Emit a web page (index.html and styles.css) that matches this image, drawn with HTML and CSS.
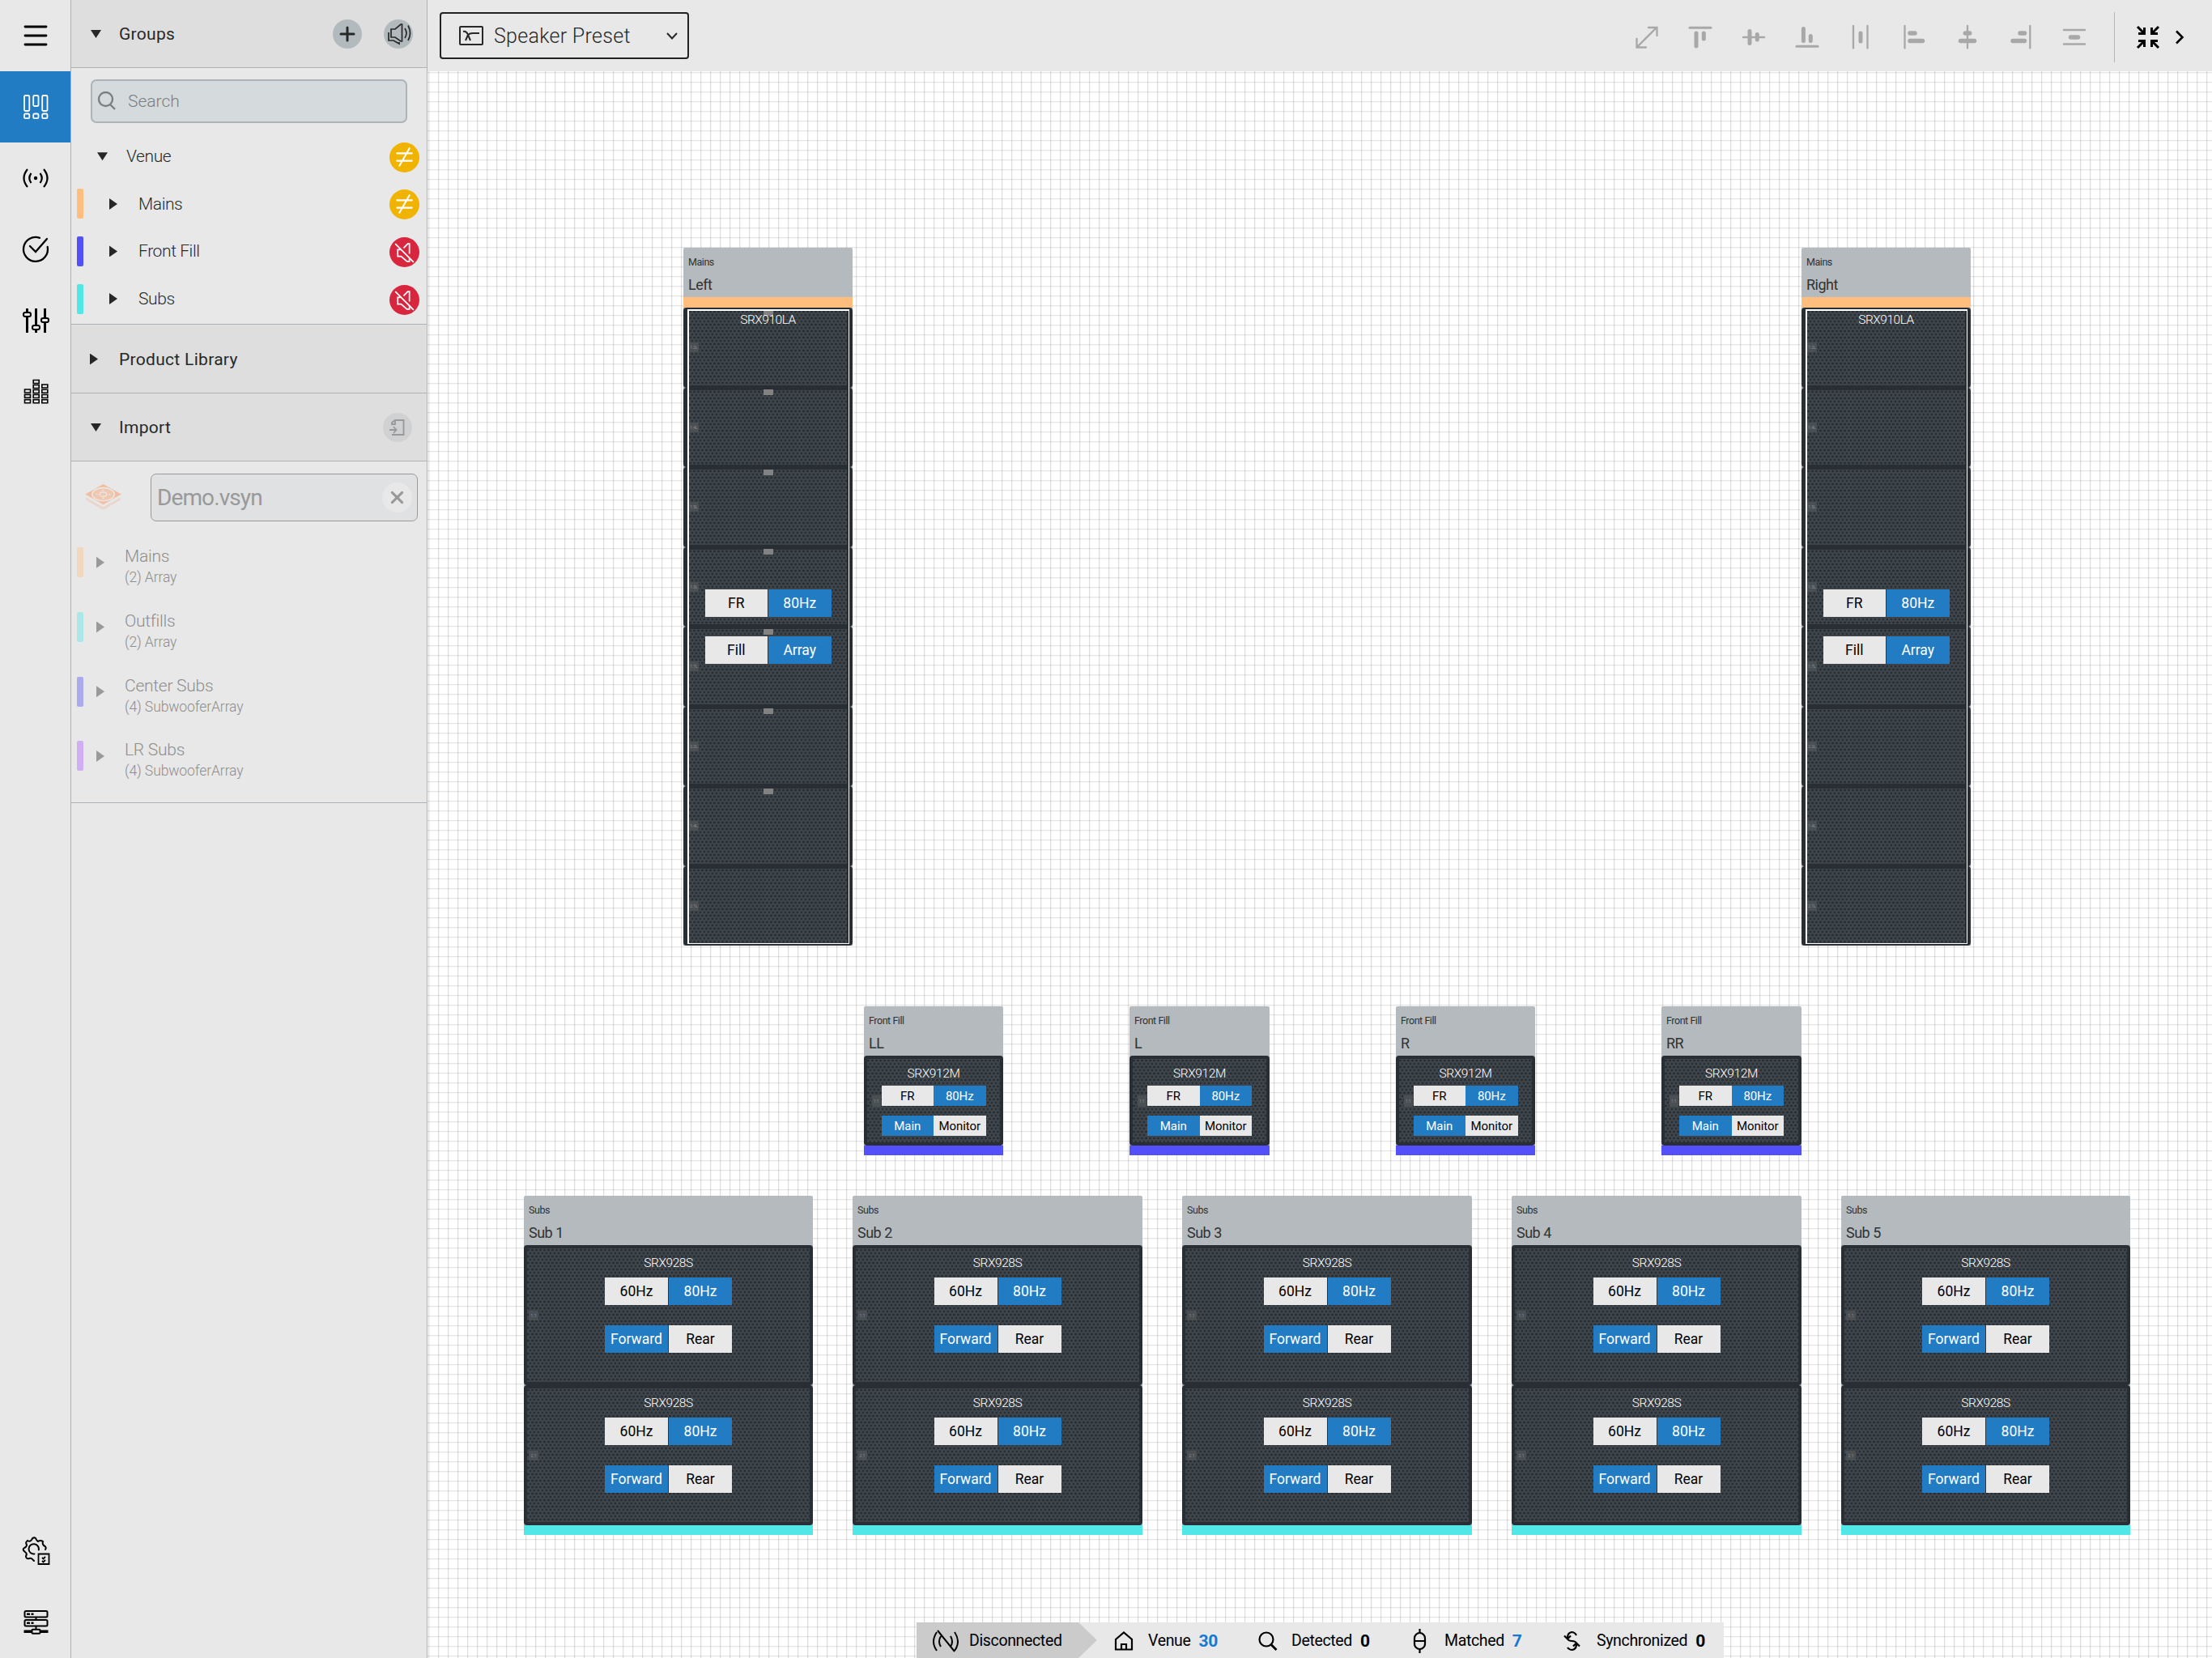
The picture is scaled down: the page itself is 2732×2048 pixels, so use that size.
FILE: index.html
```html
<!DOCTYPE html>
<html lang="en">
<head>
<meta charset="utf-8">
<title>Venue</title>
<link rel="stylesheet" href="styles.css">
</head>
<body>
<svg class="defs" width="0" height="0">
  <symbol id="not-equal" viewBox="-18 -18 36 36"><path d="M-9-5H9M-9 4H9M6-11L-6 10" fill="none" stroke="#fff" stroke-width="2" stroke-linecap="round"/></symbol>
  <symbol id="muted" viewBox="-18 -18 36 36"><path d="M-5-3H-8V5H-4L3 11H6V6M6 2V-10H4L-1-5M-11-10L11 12" fill="none" stroke="#fff" stroke-width="1.7"/></symbol>
</svg>
<div class="app">
  <nav class="rail">
    <a class="rail-item"><svg viewBox="-18 -18 36 36"><path d="M-13-11H13M-13 0H13M-13 11H13" stroke-width="2.8" stroke-linecap="round"/></svg></a>
    <a class="rail-item active"><svg viewBox="-18 -18 36 36"><g stroke-width="1.8"><rect x="-14" y="-14" width="6.3" height="19" rx="1.5"/><rect x="-2.8" y="-14" width="6.3" height="13" rx="1.5"/><rect x="8.2" y="-14" width="6.3" height="19" rx="1.5"/><rect x="-14" y="8.5" width="6.3" height="5.7" rx="1.5"/><rect x="-2.8" y="8.5" width="6.3" height="5.7" rx="1.5"/><rect x="8.2" y="8.5" width="6.3" height="5.7" rx="1.5"/></g></svg></a>
    <a class="rail-item"><svg viewBox="-18 -18 36 36"><circle r="2.2" fill="#000" stroke="none"/><path d="M-10-11Q-19 0-10 11M10-11Q19 0 10 11M-5.5-6Q-10 0-5.5 6M5.5-6Q10 0 5.5 6" stroke-width="2.2"/></svg></a>
    <a class="rail-item"><svg viewBox="-18 -18 36 36"><path d="M5-14.2A15 15 0 1 0 14.7-3M-7-4L0 3L14-13" stroke-width="2.3" stroke-linecap="round"/></svg></a>
    <a class="rail-item"><svg viewBox="-18 -18 36 36"><path d="M-10.500-15V-10M-10.500-5V15M.5-15V6M.5 11V15M11.500-15V-3M11.500 2V15" stroke-width="3"/><g stroke-width="2"><rect x="-15" y="-10" width="9" height="5" rx="2.200"/><rect x="-4" y="6" width="9" height="5" rx="2.200"/><rect x="7" y="-3" width="9" height="5" rx="2.200"/></g></svg></a>
    <a class="rail-item"><svg viewBox="-18 -18 36 36"><g stroke-width="1.6"><path d="M-13.500-3h7v4h-7zM-13.500 3.400h7v4h-7zM-13.500 9.700h7v4h-7zM-2.800-14.500h7v4h-7zM-2.800-8.500h7v4h-7zM-2.800-2.500h7v4h-7zM-2.800 3.500h7v4h-7zM-2.800 9.700h7v4h-7zM7.800-9h7v4h-7zM7.800-2.800h7v4h-7zM7.800 3.500h7v4h-7zM7.800 9.700h7v4h-7z"/></g></svg></a>
    <a class="rail-item rail-bottom"><svg viewBox="-18 -18 36 36"><path d="M12-2Q14-5 10-7Q8-9 9-12Q6-14 3-12Q1-13 0-16Q-3-18-5-14Q-7-11-10-13Q-13-11-11-8Q-11-5-14-4Q-17-2-13 1Q-10 3-12 6Q-12 10-8 9Q-5 8-3 11L-2 12M-1.500 3.500A6.200 6.200 0 1 1 3.800-1.500" stroke-width="2" stroke-linecap="round"/><path d="M3.500 3.500h13v12.500h-13zM8 8l1.500 1.500L12 7M8 12l1.500 1.500L12 11" stroke-width="1.800"/></svg></a>
    <a class="rail-item"><svg viewBox="-18 -18 36 36"><g stroke-width="2"><rect x="-13.500" y="-14" width="28" height="7.500" rx="1.500"/><rect x="-13.500" y="-3" width="28" height="7.500" rx="1.500"/><path d="M.5-6.500V-3M.5 4.500V9"/><rect x="-4.500" y="8.800" width="10" height="5" rx="1"/></g><path d="M-14.500 11.300H-5M6 11.300H15.500" stroke-width="3.500"/><path d="M-11-10.200h4M-5.500-10.200h3M-11 .8h4M-5.500.8h3" stroke-width="2.600"/></svg></a>
  </nav>

  <aside class="panel">
    <section class="section-head">
      <i class="tri down"></i><h2>Groups</h2>
      <button class="round"><svg viewBox="-18 -18 36 36"><path d="M-8 0H8M0-8V8" stroke-width="3" stroke-linecap="round"/></svg></button>
      <button class="round speaker"><svg viewBox="-18 -18 36 36"><path d="M-9-6H-4L3-12H4.500V9H3L-4 4H-9ZM-12-2V8H-6L1 12V10M8-7Q12-1 8 5M12-10.500Q17-1 12 8" stroke-width="1.700"/></svg></button>
    </section>
    <div class="search"><svg viewBox="0 0 24 24"><circle cx="10.500" cy="9.500" r="8.500"/><path d="M16.500 16.500L22 22"/></svg><span>Search</span></div>
    <ul class="groups">
      <li class="root"><i class="tri down"></i><span>Venue</span><svg class="status warn"><use href="#not-equal"/></svg></li>
      <li class="child orange"><b></b><i class="tri"></i><span>Mains</span><svg class="status warn"><use href="#not-equal"/></svg></li>
      <li class="child violet"><b></b><i class="tri"></i><span>Front Fill</span><svg class="status mute"><use href="#muted"/></svg></li>
      <li class="child cyan"><b></b><i class="tri"></i><span>Subs</span><svg class="status mute"><use href="#muted"/></svg></li>
    </ul>
    <section class="section-head library"><i class="tri"></i><h2>Product Library</h2></section>
    <section class="section-head"><i class="tri down"></i><h2>Import</h2>
      <button class="round faded"><svg viewBox="-18 -18 36 36"><path d="M-7-3V-6L-3-9H7.500V9H-7M-7-4H-3V-9M-10 3H-2M-5-1L-1.500 3L-5 7" stroke-width="1.800"/></svg></button>
    </section>
    <div class="import">
      <div class="file">
        <svg class="file-icon" viewBox="0 0 46 34"><path d="M1 17L23 29L45 17V20L23 33L1 20Z" fill="#ebd6cc"/><path d="M0 13L23 0L46 13L23 26Z" fill="#f2bea3"/><ellipse cx="23" cy="13" rx="14" ry="8.300" fill="none" stroke="#e8e8e8" stroke-width="1.800"/><ellipse cx="23" cy="13" rx="12" ry="7" fill="#efc8b2"/><ellipse cx="23" cy="13" rx="4.500" ry="2.800" fill="none" stroke="#e8e8e8" stroke-width="1.300"/><path d="M22 8h2M22 18h2M14 13h2M30 13h2M4 10L14 4M32 22L42 16" stroke="#e8e8e8" stroke-width="1.500"/></svg>
        <div class="file-name"><span>Demo.vsyn</span><button class="clear"><svg viewBox="-18 -18 36 36"><path d="M-6-6L6 6M6-6L-6 6" stroke-width="3" stroke-linecap="round"/></svg></button></div>
      </div>
      <ul class="imports">
        <li class="p-orange"><b></b><i class="tri"></i><div><span>Mains</span><small>(2) Array</small></div></li>
        <li class="p-cyan"><b></b><i class="tri"></i><div><span>Outfills</span><small>(2) Array</small></div></li>
        <li class="p-blue"><b></b><i class="tri"></i><div><span>Center Subs</span><small>(4) SubwooferArray</small></div></li>
        <li class="p-purple"><b></b><i class="tri"></i><div><span>LR Subs</span><small>(4) SubwooferArray</small></div></li>
      </ul>
    </div>
  </aside>

  <main class="main">
    <header class="topbar">
      <button class="preset">
        <svg class="preset-icon" viewBox="0 0 30 24"><rect x="1" y="1" width="28" height="22" rx="1"/><path d="M5 7Q9 6 11 11L14 18M8 18L11 11Q13 9 17 9H25"/></svg>
        <span>Speaker Preset</span>
        <svg class="caret" viewBox="0 0 14 9"><path d="M1 1L7 7.500L13 1"/></svg>
      </button>
      <div class="tools">
        <svg viewBox="-16 -16 32 32"><path d="M-12 12L12-12M2-12H12.500V-2M-12.500 2V12.500H-1" stroke-width="2.300"/></svg>
        <svg viewBox="-16 -16 32 32"><path d="M-13-11.700H13" stroke-width="3"/><path d="M-5-5V11M4.300-5V2" stroke-width="5"/></svg>
        <svg viewBox="-16 -16 32 32"><path d="M-13 0H13" stroke-width="2.500"/><path d="M-5-7.500V7.500M4.300-3.500V3" stroke-width="5"/></svg>
        <svg viewBox="-16 -16 32 32"><path d="M-13 11.200H13" stroke-width="3"/><path d="M-4.600-10.500V4.500M4.300-1.500V4.500" stroke-width="5"/></svg>
        <svg viewBox="-16 -16 32 32"><path d="M-9-14V13.500M8.500-14V13.500" stroke-width="2.300"/><path d="M0-5V5" stroke-width="5"/></svg>
        <svg viewBox="-16 -16 32 32"><path d="M-11.500-14V13.500" stroke-width="2.300"/><path d="M-5-5H1M-5 4.500H10.500" stroke-width="5.500"/></svg>
        <svg viewBox="-16 -16 32 32"><path d="M0-14V13.500" stroke-width="2.300"/><path d="M-2.700-5H2.700M-8.500 4.500H8.500" stroke-width="5.500"/></svg>
        <svg viewBox="-16 -16 32 32"><path d="M11.300-14V13.500" stroke-width="2.300"/><path d="M-1 -5H4.500M-10 4.500H4.500" stroke-width="5.500"/></svg>
        <svg viewBox="-16 -16 32 32"><path d="M-13-9H13M-13 8.500H13" stroke-width="2.500"/><path d="M-4.500 0H4.500" stroke-width="5.500"/></svg>
      </div>
      <i class="divider"></i>
      <svg class="collapse" viewBox="-16 -16 32 32"><path d="M-13-13L-5-5M-4.500-12V-4.500H-12M13-13L5-5M4.500-12V-4.500H12M-13 13L-5 5M-4.500 12V4.500H-12M13 13L5 5M4.500 12V4.500H12" stroke-width="3"/></svg>
      <svg class="next" viewBox="-10 -16 20 32"><path d="M-4-7.500L3.500 0L-4 7.500" stroke-width="2.500"/></svg>
    </header>

    <div class="canvas">
      <article class="node array n-left">
        <header><small>Mains</small><span>Left</span></header><i class="stripe"></i>
        <div class="body slots">
          <div class="cab"><em>1.2L</em></div><div class="cab"><em>1.4L</em></div><div class="cab"><em>1.5L</em></div><div class="cab"><em>1.3L</em></div>
          <div class="cab"><em>1.7L</em></div><div class="cab"><em>2.2L</em></div><div class="cab"><em>1.4L</em></div><div class="cab"><em>2.1L</em></div>
          <div class="frame"><p>SRX910LA</p><div class="toggle"><span>FR</span><span class="on">80Hz</span></div><div class="toggle"><span>Fill</span><span class="on">Array</span></div></div>
        </div>
      </article>
      <article class="node array n-right">
        <header><small>Mains</small><span>Right</span></header><i class="stripe"></i>
        <div class="body">
          <div class="cab"><em>1.2L</em></div><div class="cab"><em>1.4L</em></div><div class="cab"><em>1.5L</em></div><div class="cab"><em>1.3L</em></div>
          <div class="cab"><em>1.7L</em></div><div class="cab"><em>2.2L</em></div><div class="cab"><em>1.4L</em></div><div class="cab"><em>2.1L</em></div>
          <div class="frame"><p>SRX910LA</p><div class="toggle"><span>FR</span><span class="on">80Hz</span></div><div class="toggle"><span>Fill</span><span class="on">Array</span></div></div>
        </div>
      </article>

      <article class="node fill f1"><header><small>Front Fill</small><span>LL</span></header><div class="body"><div class="cab"><em>1:1</em><p>SRX912M</p><div class="toggle"><span>FR</span><span class="on">80Hz</span></div><div class="toggle"><span class="on">Main</span><span>Monitor</span></div></div></div><i class="stripe"></i></article>
      <article class="node fill f2"><header><small>Front Fill</small><span>L</span></header><div class="body"><div class="cab"><em>1:1</em><p>SRX912M</p><div class="toggle"><span>FR</span><span class="on">80Hz</span></div><div class="toggle"><span class="on">Main</span><span>Monitor</span></div></div></div><i class="stripe"></i></article>
      <article class="node fill f3"><header><small>Front Fill</small><span>R</span></header><div class="body"><div class="cab"><em>1:1</em><p>SRX912M</p><div class="toggle"><span>FR</span><span class="on">80Hz</span></div><div class="toggle"><span class="on">Main</span><span>Monitor</span></div></div></div><i class="stripe"></i></article>
      <article class="node fill f4"><header><small>Front Fill</small><span>RR</span></header><div class="body"><div class="cab"><em>1:1</em><p>SRX912M</p><div class="toggle"><span>FR</span><span class="on">80Hz</span></div><div class="toggle"><span class="on">Main</span><span>Monitor</span></div></div></div><i class="stripe"></i></article>

      <article class="node sub s1"><header><small>Subs</small><span>Sub 1</span></header><div class="body">
        <div class="cab"><em>1.1</em><p>SRX928S</p><div class="toggle"><span>60Hz</span><span class="on">80Hz</span></div><div class="toggle"><span class="on">Forward</span><span>Rear</span></div></div>
        <div class="cab"><em>2.1</em><p>SRX928S</p><div class="toggle"><span>60Hz</span><span class="on">80Hz</span></div><div class="toggle"><span class="on">Forward</span><span>Rear</span></div></div>
      </div><i class="stripe"></i></article>
      <article class="node sub s2"><header><small>Subs</small><span>Sub 2</span></header><div class="body">
        <div class="cab"><em>1.1</em><p>SRX928S</p><div class="toggle"><span>60Hz</span><span class="on">80Hz</span></div><div class="toggle"><span class="on">Forward</span><span>Rear</span></div></div>
        <div class="cab"><em>2.1</em><p>SRX928S</p><div class="toggle"><span>60Hz</span><span class="on">80Hz</span></div><div class="toggle"><span class="on">Forward</span><span>Rear</span></div></div>
      </div><i class="stripe"></i></article>
      <article class="node sub s3"><header><small>Subs</small><span>Sub 3</span></header><div class="body">
        <div class="cab"><em>1.1</em><p>SRX928S</p><div class="toggle"><span>60Hz</span><span class="on">80Hz</span></div><div class="toggle"><span class="on">Forward</span><span>Rear</span></div></div>
        <div class="cab"><em>2.1</em><p>SRX928S</p><div class="toggle"><span>60Hz</span><span class="on">80Hz</span></div><div class="toggle"><span class="on">Forward</span><span>Rear</span></div></div>
      </div><i class="stripe"></i></article>
      <article class="node sub s4"><header><small>Subs</small><span>Sub 4</span></header><div class="body">
        <div class="cab"><em>1.1</em><p>SRX928S</p><div class="toggle"><span>60Hz</span><span class="on">80Hz</span></div><div class="toggle"><span class="on">Forward</span><span>Rear</span></div></div>
        <div class="cab"><em>2.1</em><p>SRX928S</p><div class="toggle"><span>60Hz</span><span class="on">80Hz</span></div><div class="toggle"><span class="on">Forward</span><span>Rear</span></div></div>
      </div><i class="stripe"></i></article>
      <article class="node sub s5"><header><small>Subs</small><span>Sub 5</span></header><div class="body">
        <div class="cab"><em>1.1</em><p>SRX928S</p><div class="toggle"><span>60Hz</span><span class="on">80Hz</span></div><div class="toggle"><span class="on">Forward</span><span>Rear</span></div></div>
        <div class="cab"><em>2.1</em><p>SRX928S</p><div class="toggle"><span>60Hz</span><span class="on">80Hz</span></div><div class="toggle"><span class="on">Forward</span><span>Rear</span></div></div>
      </div><i class="stripe"></i></article>

      <footer class="statusbar">
        <div class="seg offline"><svg viewBox="-16 -16 32 32"><path d="M-11-11Q-19 1-11 12M-6-6Q-10 1-6 7M11-11Q19 1 11 12M6-6Q10 1 6 7M-10-13L11 13" stroke-width="2"/></svg><span>Disconnected</span></div>
        <div class="seg"><svg viewBox="-16 -16 32 32"><path d="M-11-2L-1-10.500L9-2V10.500H-11ZM-4 10V4H2V10" stroke-width="2.200"/></svg><span>Venue</span><strong class="blue">30</strong></div>
        <div class="seg"><svg viewBox="-16 -16 32 32"><circle cx="-2" cy="-2" r="8.500" stroke-width="2.200"/><path d="M4 4.500L10.500 11" stroke-width="2.800"/></svg><span>Detected</span><strong>0</strong></div>
        <div class="seg"><svg viewBox="-16 -16 32 32"><rect x="-8" y="-10" width="13" height="20" rx="6.500" stroke-width="2.200"/><path d="M-7.500 0H4.500M-1.500-15V-10M-1.500 10V15" stroke-width="2.200"/></svg><span>Matched</span><strong class="blue">7</strong></div>
        <div class="seg"><svg viewBox="-16 -16 32 32"><path d="M4-7Q2-11-2-11Q-7-10-7-4M-11-6.500L-7-2.500L-3-6.500M-7 8Q-5 11-1 11Q4 10 4 4M8 6.500L4 2.500L0 6.500M-7-3Q-6 0-1.500 0Q3 0 4 3" stroke-width="2.200"/></svg><span>Synchronized</span><strong>0</strong></div>
      </footer>
    </div>
  </main>
</div>
</body>
</html>
```
FILE: styles.css
```css
* { box-sizing: border-box; margin: 0; padding: 0; }
body { width: 2732px; height: 2048px; overflow: hidden; background: #e8e8e8; color: #262828; font-family: Roboto, "Open Sans", sans-serif; font-weight: 300; font-size: 21px; }
button { border: 0; background: none; font: inherit; color: inherit; }
ul { list-style: none; }
svg { display: block; fill: none; stroke: currentColor; flex: none; }
.defs { position: absolute; }
.app { display: grid; grid-template-columns: 88px 440px 1fr; height: 2048px; }

/* left rail */
.rail { display: flex; flex-direction: column; border-right: 1px solid #adb3b7; color: #000; }
.rail-item { height: 88px; display: flex; align-items: center; justify-content: center; }
.rail-item svg { width: 36px; height: 36px; }
.rail-item.active { background: #227cc3; color: #fff; }
.rail-bottom { margin-top: auto; }

/* side panel */
.panel { border-right: 1px solid #adb3b7; }
.section-head { height: 84px; display: flex; align-items: center; padding: 1px 17px 0 24px; background: #dedede; border-bottom: 1px solid #adb3b7; }
.section-head h2 { flex: 1; font-size: 21px; font-weight: 400; letter-spacing: .3px; }
.section-head.library { height: 86px; border-top: 1px solid #adb3b7; padding-left: 23px; }
.section-head.library h2 { padding-left: 1px; }
.tri { width: 14px; height: 14px; background: #262828; clip-path: polygon(0 0, 10px 50%, 0 100%); flex: none; }
.tri.down { clip-path: polygon(0 2px, 13px 2px, 6.5px 12px); }
.section-head .tri { margin-right: 21px; }
.round { width: 36px; height: 36px; border-radius: 50%; background: #b3babe; }
.round svg { width: 36px; height: 36px; }
.round + .round { margin-left: 27px; }
.round.faded { background: #cfd1d3; color: #999; margin-right: 1px; }
.search { margin: 14px 24px 12px; height: 54px; display: flex; align-items: center; padding-left: 6px; border: 2px solid #adb3b7; border-radius: 7px; background: #d5dadd; color: #7b7f81; }
.search svg { width: 24px; height: 24px; stroke-width: 2.4; margin-right: 14px; }
.groups { height: 236px; }
.groups li { height: 58.6px; display: flex; align-items: center; padding-right: 9px; letter-spacing: -.4px; }
.groups span { flex: 1; }
.groups .root { padding-left: 32px; }
.root .tri { margin-right: 22px; }
.child b { width: 8px; height: 37px; border-radius: 2px; margin: 0 32px 0 7px; }
.child .tri { margin-right: 22px; }
.status { width: 37px; height: 37px; border-radius: 50%; margin-top: 2px; }
.warn { background: #f0b400; }
.mute { background: #d8263f; }
.orange b { background: #ffbe7d; }
.violet b { background: #5350fa; }
.cyan b { background: #51e7e6; }
.import { height: 422px; border-bottom: 1px solid #adb3b7; color: #999; padding-top: 15px; }
.file { display: flex; align-items: center; padding: 0 11px 0 17px; }
.file-icon { width: 45px; height: 33px; stroke: none; margin-right: 36px; }
.file-name { flex: 1; height: 59px; display: flex; align-items: center; padding: 0 6px 0 7px; border: 1px solid #999; border-radius: 7px; background: #dfe1e3; font-size: 28px; font-weight: 400; letter-spacing: -.9px; }
.file-name span { flex: 1; }
.clear, .clear svg { width: 37px; height: 37px; border-radius: 50%; background: #e8e8e8; }
.imports { padding-top: 11px; }
.imports li { height: 79.7px; display: flex; align-items: center; }
.imports b { width: 8px; height: 37px; border-radius: 2px; margin: 0 16px 0 7px; }
.imports .tri { background: #999; margin-right: 21px; }
.imports div { display: flex; flex-direction: column; padding-top: 11px; color: #8e8e8e; }
.imports span { line-height: 26px; letter-spacing: -.25px; }
.imports small { font-size: 17.5px; line-height: 26px; letter-spacing: -.1px; }
.p-orange b { background: #f1d7bc; }
.p-cyan b { background: #aae7e6; }
.p-blue b { background: #abaaee; }
.p-purple b { background: #cfaef3; }

/* top bar */
.main { display: flex; flex-direction: column; }
.topbar { height: 88px; display: flex; align-items: center; padding: 0 30px 0 15px; }
.preset { width: 308px; height: 58px; display: flex; align-items: center; padding: 0 12px 0 22px; border: 2px solid #222; border-radius: 4px; font-size: 25px; letter-spacing: .3px; }
.preset span { flex: 1; text-align: left; padding-left: 13px; }
.preset-icon { width: 30px; height: 24px; stroke-width: 2; }
.caret { width: 14px; height: 9px; stroke-width: 2; }
.tools { display: flex; margin-left: auto; padding-top: 4px; color: #a8a8a8; }
.tools svg { width: 32px; height: 32px; margin: 0 17px; stroke-linecap: round; }
.divider { width: 1px; height: 62px; margin: 4px 25px 0 16px; background: #b5b5b5; }
.collapse { width: 32px; height: 32px; margin-top: 4px; color: #000; }
.next { width: 20px; height: 32px; margin: 4px 0 0 13px; color: #000; }

/* canvas */
.canvas { position: relative; flex: 1; background-color: #fff; background-image: linear-gradient(#e5e5e5 1px, #f7f7f7 1px 2px, transparent 2px), linear-gradient(90deg, #e5e5e5 1px, transparent 1px), linear-gradient(90deg, #f7f7f7 2px, transparent 2px); background-size: 12px 12px; background-position: 1px 1px; background-blend-mode: multiply; }
.node { position: absolute; color: #303234; }
.node header { height: 61px; padding: 8px 6px 0; display: flex; flex-direction: column; background: #b4babe; border-radius: 2px 2px 0 0; }
.node small { font-size: 12.5px; line-height: 20px; letter-spacing: -.45px; font-weight: 400; }
.node header span { font-size: 18px; line-height: 33px; margin-top: 1px; letter-spacing: -.5px; font-weight: 400; }
.stripe { display: block; height: 12px; }
.body { position: relative; background: #aab3ba; }
.cab { position: relative; border: 4px solid #282e33; border-radius: 4px; background-color: #3f464b; background-image: radial-gradient(circle at 1.5px 2px, #282e33 1.2px, transparent 1.7px), radial-gradient(circle at 4px 6px, #282e33 1.2px, transparent 1.7px); background-size: 5px 8px; }
.cab em { position: absolute; left: 2px; width: 12px; height: 12px; background: #4a4f54; color: #8a9096; font: 400 5px/12px Roboto, sans-serif; text-align: center; }
.node p { text-align: center; color: #fff; font-size: 15.5px; line-height: 20px; letter-spacing: -.4px; font-weight: 300; }
.toggle { display: flex; gap: 1px; margin: 0 auto; width: 157px; height: 34px; background: #30373c; }
.toggle span { flex: 1 1 0; display: flex; align-items: center; justify-content: center; background: #e8e8e8; color: #000; font-size: 17.5px; font-weight: 400; }
.toggle .on { background: #227cc3; color: #fff; }

.array { width: 209px; top: 218px; }
.array .stripe { height: 13px; background: #ffbe7d; }
.array .cab { height: 98.5px; border-width: 3px 7px; }
.array .cab em { left: 0; top: 40px; }
.slots .cab:nth-child(-n+7)::before { content: ""; position: absolute; left: 92px; top: -.5px; width: 12px; height: 7px; background: #828282; }
.frame { position: absolute; inset: 2px 4px 2px 5px; border: solid #fff; border-width: 2px 1px 1px 2px; padding-right: 2px; }
.frame p { padding-top: 1px; letter-spacing: -.5px; }
.frame .toggle { width: 156px; margin-top: 323px; }
.frame .toggle + .toggle { margin-top: 24px; }
.n-left { left: 316px; }
.n-right { left: 1697px; }

.fill { width: 172px; top: 1155px; }
.fill .cab { height: 111px; padding-top: 8px; }
.fill .cab em { left: 6px; top: 45px; height: 14px; line-height: 14px; width: 11px; }
.fill .toggle { width: 129px; height: 25px; gap: 0; margin-top: 5px; }
.fill .toggle + .toggle { margin-top: 12px; }
.fill .toggle span { font-size: 15px; letter-spacing: -.1px; }
.fill .stripe { background: #5350fa; }
.f1 { left: 539px; } .f2 { left: 867px; } .f3 { left: 1196px; } .f4 { left: 1524px; }
.f2, .f4 { width: 173px; }

.sub { width: 357px; top: 1389px; }
.sub .cab { height: 173px; padding-top: 8px; }
.sub .cab em { top: 77px; }
.sub .toggle { margin-top: 8px; }
.sub .toggle + .toggle { margin-top: 25px; }
.sub .stripe { background: #51e7e6; }
.s1 { left: 119px; } .s2 { left: 525px; } .s3 { left: 932px; } .s4 { left: 1339px; } .s5 { left: 1746px; }
.s2, .s3, .s4 { width: 358px; }

/* status bar */
.statusbar { position: absolute; left: 604px; bottom: 0; height: 44px; display: grid; grid-template-columns: 223px 177px 189px 188px 220px; background: #e8e8e8; color: #000; font-size: 19.5px; font-weight: 400; letter-spacing: -.35px; }
.seg { display: flex; align-items: center; padding: 1px 0 0 18px; }
.seg svg { width: 32px; height: 32px; margin-right: 13px; }
.seg strong { margin-left: 10px; font-size: 21px; font-weight: 700; }
.offline { background: #cbcbcb; clip-path: polygon(0 0, 200px 0, 100% 50%, 200px 100%, 0 100%); padding-left: 20px; }
.blue { color: #1479d0; }
```
